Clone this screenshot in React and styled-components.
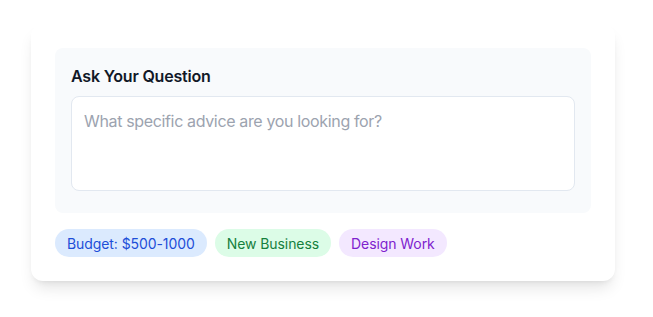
import styled, { createGlobalStyle } from 'styled-components';

const GlobalStyle = createGlobalStyle`
    body {
        margin: 0;
        background: #ffffff;
        font-family: Inter, "Liberation Sans", sans-serif;
    }
`;

const Page = styled.div`
    padding: 24px 38px 36px 31px;
`;

const Card = styled.div`
    background: #ffffff;
    border-radius: 12px;
    box-shadow: 0 10px 15px -3px rgba(0, 0, 0, 0.1), 0 4px 6px -4px rgba(0, 0, 0, 0.1);
    padding: 24px;
    display: flex;
    flex-direction: column;
    gap: 16px;
`;

const Panel = styled.div`
    background: #f8fafc;
    border-radius: 8px;
    padding: 16px 16px 22px;
    display: flex;
    flex-direction: column;
    gap: 8px;
`;

const Label = styled.label`
    font-size: 16px;
    line-height: 24px;
    font-weight: 600;
    letter-spacing: -0.2px;
    color: #111827;
`;

const TextArea = styled.textarea`
    box-sizing: border-box;
    width: 100%;
    height: 95px;
    padding: 12px;
    border: 1px solid #e2e8f0;
    border-radius: 8px;
    background: #ffffff;
    font-family: inherit;
    font-size: 16px;
    line-height: 24px;
    letter-spacing: -0.35px;
    color: #111827;
    resize: none;
    outline: none;

    &::placeholder {
        color: #9ca3af;
    }
`;

const TagRow = styled.div`
    display: flex;
    gap: 8px;
`;

const tones = {
    blue: { bg: '#dbeafe', fg: '#1d4ed8' },
    green: { bg: '#dcfce7', fg: '#15803d' },
    purple: { bg: '#f3e8ff', fg: '#7e22ce' },
};

const Tag = styled.span`
    display: inline-flex;
    align-items: center;
    height: 28px;
    padding: 0 12px;
    border-radius: 999px;
    font-size: 14px;
    letter-spacing: -0.08px;
    background: ${({ $tone }) => tones[$tone].bg};
    color: ${({ $tone }) => tones[$tone].fg};
`;

export default function App() {
    return (
        <Page>
            <GlobalStyle />
            <Card>
                <Panel>
                    <Label htmlFor="question">Ask Your Question</Label>
                    <TextArea id="question" placeholder="What specific advice are you looking for?" />
                </Panel>
                <TagRow>
                    <Tag $tone="blue">Budget: $500-1000</Tag>
                    <Tag $tone="green">New Business</Tag>
                    <Tag $tone="purple">Design Work</Tag>
                </TagRow>
            </Card>
        </Page>
    );
}
